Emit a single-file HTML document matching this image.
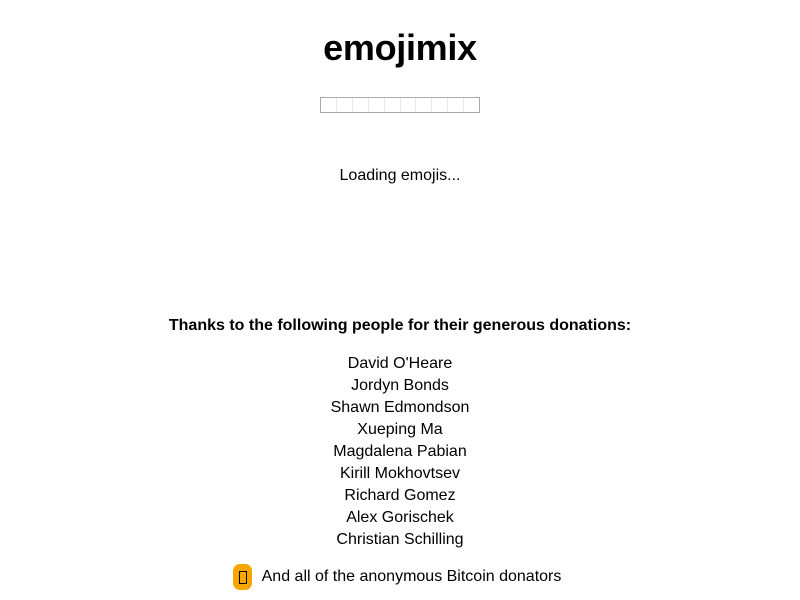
<!DOCTYPE html>
<html><head><style>
body{margin:0;width:800px;height:600px;background:#fff;font-family:"Liberation Sans",sans-serif;color:#000;text-align:center;position:relative;overflow:hidden}
h1{position:absolute;top:27px;left:0;width:800px;margin:0;font-size:36px;font-weight:bold;line-height:42px;letter-spacing:-0.3px}
.box{position:absolute;left:320px;top:97px;width:158px;height:14px;border:1px solid #aaa;display:flex}
.box div{flex:1;border-right:1px solid #e8e8e8}
.box div:last-child{border-right:none}
.t{position:absolute;left:0;width:800px;font-size:16px;line-height:22px}
.badge{display:inline-block;width:19px;height:26px;background:#f7a600;border-radius:7px;vertical-align:middle;position:relative;margin-right:10px}
.badge:after{content:"";position:absolute;left:6px;top:7px;width:6px;height:11px;border:1px solid #000}
</style></head><body>
<h1>emojimix</h1>
<div class="box"><div></div><div></div><div></div><div></div><div></div><div></div><div></div><div></div><div></div><div></div></div>
<div class="t" style="top:165px">Loading emojis...</div>
<div class="t" style="top:315px;font-weight:bold">Thanks to the following people for their generous donations:</div>
<div class="t" style="top:353px">David O'Heare<br>Jordyn Bonds<br>Shawn Edmondson<br>Xueping Ma<br>Magdalena Pabian<br>Kirill Mokhovtsev<br>Richard Gomez<br>Alex Gorischek<br>Christian Schilling</div>
<div class="t" style="top:564px;line-height:26px;padding-right:6px;box-sizing:border-box"><span class="badge"></span>And all of the anonymous Bitcoin donators</div>
</body></html>
